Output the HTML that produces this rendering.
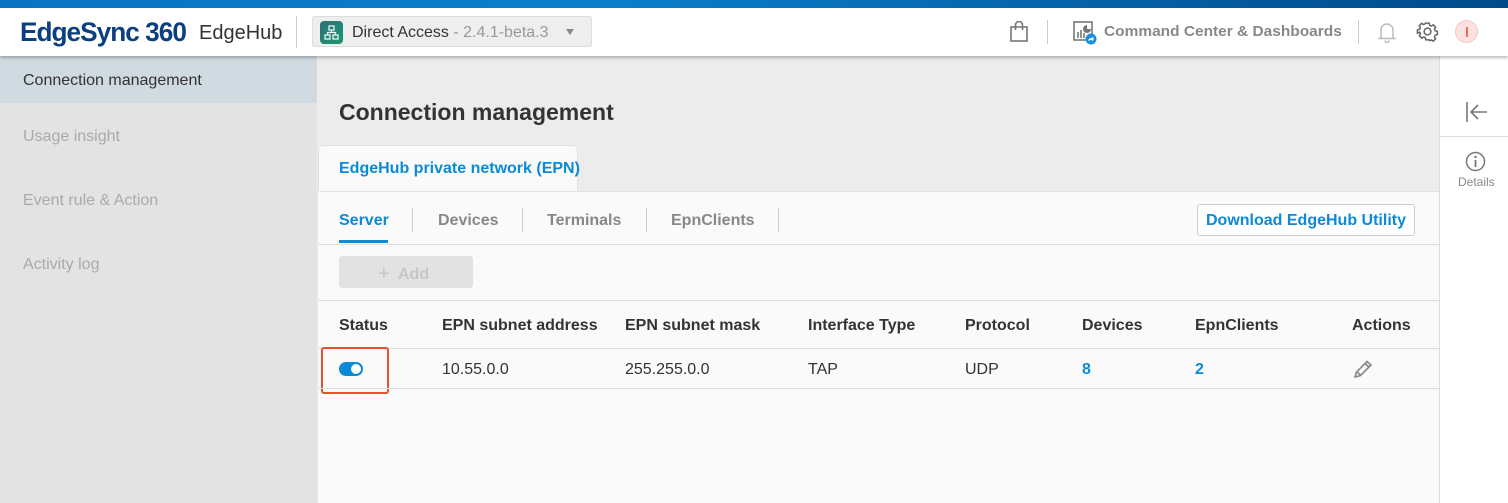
<!DOCTYPE html>
<html><head><meta charset="utf-8"><style>
*{margin:0;padding:0;box-sizing:border-box}
body{width:1508px;height:503px;overflow:hidden;position:relative;font-family:"Liberation Sans",Arial,sans-serif;background:#ececec}
.a{position:absolute;white-space:nowrap}
.topbar{left:0;top:0;width:1508px;height:8px;background:linear-gradient(90deg,#0a74c4,#0a7fcc 40%,#004a8a)}
.header{left:0;top:8px;width:1508px;height:48px;background:#fff;box-shadow:0 2px 3px rgba(0,0,0,.25);z-index:3}
.side{left:0;top:56px;width:317px;height:447px;background:#e3e3e3}
.side .it{position:absolute;left:23px;font-size:16px;color:#aaa}
.vs{position:absolute;width:1px;background:#ccc}
.th{position:absolute;top:317px;font-size:16px;font-weight:bold;color:#333}
.td{position:absolute;top:361px;font-size:16px;color:#333}
.hl{position:absolute;left:318px;width:1121px;height:1px;background:#ddd}
</style></head><body>
<div class="a topbar"></div>
<div class="a header">
  <div class="a" style="left:20px;top:9px;font-size:27px;font-weight:bold;color:#0b3f80;letter-spacing:-1px;transform:scaleX(.97);transform-origin:left">EdgeSync 360</div>
  <div class="a" style="left:199px;top:14px;font-size:20px;color:#333">EdgeHub</div>
  <div class="vs" style="left:296px;top:8px;height:32px"></div>
  <div class="a" style="left:312px;top:8px;width:280px;height:31px;background:#eee;border:1px solid #ddd;border-radius:3px">
    <div class="a" style="left:7px;top:4px;width:23px;height:23px;border-radius:4px;background:linear-gradient(135deg,#2e6f7a,#1a9a70)">
      <svg width="23" height="23" viewBox="0 0 23 23"><g fill="none" stroke="#e8f4f0" stroke-width="1.3"><rect x="9" y="5" width="5" height="4"/><rect x="5" y="14" width="5" height="4"/><rect x="13" y="14" width="5" height="4"/><path d="M11.5 9v2.5M7.5 14v-2.5h8v2.5"/></g></svg>
    </div>
    <div class="a" style="left:39px;top:7px;font-size:16px;color:#333">Direct Access <span style="color:#999">- 2.4.1-beta.3</span></div>
    <div class="a" style="left:253px;top:12px;width:0;height:0;border-left:4px solid transparent;border-right:4px solid transparent;border-top:6px solid #888"></div>
  </div>
  <svg class="a" style="left:1009px;top:13px" width="20" height="22" viewBox="0 0 20 22"><g fill="none" stroke="#777" stroke-width="1.6"><rect x="2" y="6" width="16" height="14"/><path d="M6.5 9V4a3.5 3.5 0 0 1 7 0v5"/></g></svg>
  <div class="vs" style="left:1047px;top:12px;height:24px"></div>
  <svg class="a" style="left:1073px;top:13px" width="24" height="24" viewBox="0 0 24 24"><rect x="1" y="1" width="18" height="18" fill="none" stroke="#777" stroke-width="1.6"/><path d="M5 17v-6M8 17v-8M11 17v-5" stroke="#777" stroke-width="1.6"/><path d="M14 4a4 4 0 1 0 4 4h-4z" fill="#777"/><circle cx="18" cy="18" r="5.5" fill="#1a8fe0"/><path d="M15 20c.5-2 2-3 4-3v-1.5l2 2.5-2 2.5V19c-1.5 0-2.5.3-4 1z" fill="#fff"/></svg>
  <div class="a" style="left:1104px;top:15px;font-size:15px;font-weight:bold;color:#888;transform:scaleX(1.03);transform-origin:left">Command Center &amp; Dashboards</div>
  <div class="vs" style="left:1358px;top:12px;height:24px"></div>
  <svg class="a" style="left:1377px;top:13px" width="20" height="22" viewBox="0 0 20 22"><path d="M4 16V9a6 6 0 0 1 12 0v7l1.5 1.5h-15z M8 19.5a2 2 0 0 0 4 0" fill="none" stroke="#bbb" stroke-width="1.5"/></svg>
  <svg class="a" style="left:1416px;top:12px" width="23" height="23" viewBox="0 0 24 24"><path d="M10 2h4l.6 2.6 2 .9 2.3-1.4 2.8 2.8-1.4 2.3.9 2 2.6.6v4l-2.6.6-.9 2 1.4 2.3-2.8 2.8-2.3-1.4-2 .9L14 22h-4l-.6-2.6-2-.9-2.3 1.4-2.8-2.8 1.4-2.3-.9-2L0 14v-4l2.6-.6.9-2-1.4-2.3 2.8-2.8 2.3 1.4 2-.9z" transform="translate(1.5 1.5) scale(.875)" fill="none" stroke="#666" stroke-width="1.8"/><circle cx="12" cy="12" r="3.5" fill="none" stroke="#666" stroke-width="1.6"/></svg>
  <div class="a" style="left:1455px;top:12px;width:23px;height:23px;border-radius:50%;background:#fde3df;border:1px solid #f5c7c0"><div style="position:absolute;left:10px;top:6px;width:1.5px;height:10px;background:#f06a5a"></div></div>
</div>

<div class="a side">
  <div class="a" style="left:0;top:0;width:317px;height:47px;background:#d0dae1"></div>
  <div class="it" style="top:16px;color:#333">Connection management</div>
  <div class="it" style="top:72px">Usage insight</div>
  <div class="it" style="top:136px">Event rule &amp; Action</div>
  <div class="it" style="top:200px">Activity log</div>
</div>

<div class="a" style="left:1439px;top:56px;width:69px;height:447px;background:#fff;border-left:1px solid #ddd"></div>
<div class="a" style="left:1440px;top:136px;width:68px;height:1px;background:#ddd"></div>
<svg class="a" style="left:1465px;top:101px" width="24" height="22" viewBox="0 0 24 22"><path d="M2 1v20M22 11H7M13 4l-7 7 7 7" fill="none" stroke="#777" stroke-width="1.6"/></svg>
<svg class="a" style="left:1465px;top:151px" width="21" height="21" viewBox="0 0 21 21"><circle cx="10.5" cy="10.5" r="9" fill="none" stroke="#777" stroke-width="1.5"/><circle cx="10.5" cy="6" r="1.2" fill="#777"/><path d="M10.5 9v7" stroke="#777" stroke-width="1.8"/></svg>
<div class="a" style="left:1458px;top:175px;font-size:12px;color:#888">Details</div>

<div class="a" style="left:339px;top:99px;font-size:23px;font-weight:bold;color:#333">Connection management</div>
<div class="a" style="left:318px;top:145px;width:260px;height:50px;background:#fafafa;border:1px solid #e2e2e2;border-bottom:none;border-radius:5px 5px 0 0"></div>
<div class="a" style="left:339px;top:160px;font-size:16px;font-weight:bold;color:#0b8ad6">EdgeHub private network (EPN)</div>
<div class="a" style="left:318px;top:191px;width:1121px;height:312px;background:#fafafa;border-top:1px solid #e2e2e2"></div>
<div class="a" style="left:577px;top:191px;width:862px;height:1px;background:#e2e2e2"></div>

<div class="a" style="left:339px;top:212px;font-size:16px;font-weight:bold;color:#0b8ad6">Server</div>
<div class="a" style="left:339px;top:240px;width:49px;height:3px;background:#0b8ad6"></div>
<div class="vs" style="left:412px;top:208px;height:24px;background:#ccc"></div>
<div class="a" style="left:438px;top:212px;font-size:16px;font-weight:bold;color:#888">Devices</div>
<div class="vs" style="left:522px;top:208px;height:24px"></div>
<div class="a" style="left:547px;top:212px;font-size:16px;font-weight:bold;color:#888">Terminals</div>
<div class="vs" style="left:646px;top:208px;height:24px"></div>
<div class="a" style="left:671px;top:212px;font-size:16px;font-weight:bold;color:#888">EpnClients</div>
<div class="vs" style="left:778px;top:208px;height:24px"></div>
<div class="a" style="left:1197px;top:204px;width:218px;height:32px;border:1px solid #ccc;border-radius:3px;background:#fff"></div>
<div class="a" style="left:1206px;top:212px;font-size:16px;font-weight:bold;color:#0b8ad6">Download EdgeHub Utility</div>
<div class="hl" style="top:244px"></div>

<div class="a" style="left:339px;top:256px;width:134px;height:32px;background:#e2e2e2;border-radius:3px"></div>
<div class="a" style="left:378px;top:262px;font-size:16px;font-weight:bold;color:#c6c6c6"><span style="font-weight:normal;font-size:20px;position:relative;top:1px">+</span>&nbsp; Add</div>
<div class="hl" style="top:300px"></div>

<div class="th" style="left:339px">Status</div>
<div class="th" style="left:442px">EPN subnet address</div>
<div class="th" style="left:625px">EPN subnet mask</div>
<div class="th" style="left:808px">Interface Type</div>
<div class="th" style="left:965px">Protocol</div>
<div class="th" style="left:1082px">Devices</div>
<div class="th" style="left:1195px">EpnClients</div>
<div class="th" style="left:1352px">Actions</div>
<div class="hl" style="top:348px"></div>

<div class="a" style="left:321px;top:347px;width:68px;height:47px;border:2px solid #e8502f;border-radius:3px"></div>
<div class="a" style="left:339px;top:362px;width:24px;height:14px;border-radius:7px;background:#0b8ad6"><div style="position:absolute;right:2px;top:2px;width:10px;height:10px;border-radius:50%;background:#fff"></div></div>
<div class="td" style="left:442px">10.55.0.0</div>
<div class="td" style="left:625px">255.255.0.0</div>
<div class="td" style="left:808px">TAP</div>
<div class="td" style="left:965px">UDP</div>
<div class="td" style="left:1082px;color:#0b8ad6;font-weight:bold">8</div>
<div class="td" style="left:1195px;color:#0b8ad6;font-weight:bold">2</div>
<svg class="a" style="left:1353px;top:359px" width="22" height="20" viewBox="0 0 22 20"><path d="M2 18l1.5-5L14 2.5l4 3.5L7.5 16.5z M12 4.5l4 3.5 M4 13l4 3.5" fill="none" stroke="#888" stroke-width="1.6"/></svg>
<div class="hl" style="top:388px"></div>
</body></html>
